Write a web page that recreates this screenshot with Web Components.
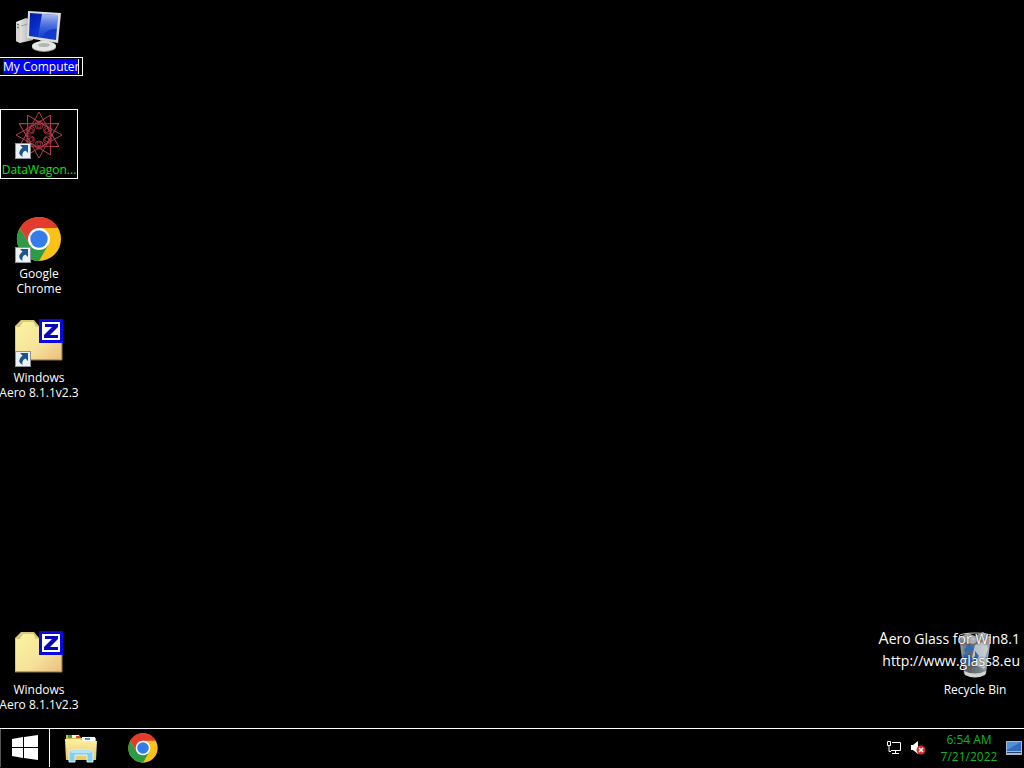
<!DOCTYPE html>
<html lang="en">
<head>
<meta charset="utf-8">
<title>Desktop</title>
<style>
html, body { margin: 0; height: 100%; background: #000; color: #fff; overflow: hidden; }
body { font: 12px/15px "Open Sans", "Noto Sans", sans-serif; }
</style>
</head>
<body>
<desktop-shell>
  <desktop-icon slot="icons" row="1" col="1" icon="computer" label="My Computer" editing></desktop-icon>
  <desktop-icon slot="icons" row="2" col="1" icon="wagon" label="DataWagon..." shortcut selected></desktop-icon>
  <desktop-icon slot="icons" row="3" col="1" icon="chrome" label="Google Chrome" shortcut></desktop-icon>
  <desktop-icon slot="icons" row="4" col="1" icon="folder" label="Windows Aero&nbsp;8.1.1v2.3" shortcut></desktop-icon>
  <desktop-icon slot="icons" row="7" col="1" icon="folder" label="Windows Aero&nbsp;8.1.1v2.3"></desktop-icon>
  <desktop-icon slot="icons" row="7" col="3" icon="bin" label="Recycle Bin"></desktop-icon>
  <glass-watermark slot="overlay"></glass-watermark>
  <task-bar slot="taskbar"></task-bar>
</desktop-shell>
<script>
// Line work of the DataWagon emblem: long crossing spikes turned about the centre, with loops inside.
const rays = Array.from({ length: 12 }, (_, i) =>
  `<path d="M24 1 14 19M24 1 34 19" transform="rotate(${i * 30} 24 24)"/>`).join("");
const rings = Array.from({ length: 6 }, (_, i) =>
  `<g transform="rotate(${i * 60} 24 24)"><circle cx="24" cy="14" r="4"/><circle cx="24" cy="15" r="2"/></g>`).join("");

const ICONS = {
  computer: `<svg viewBox="0 0 48 48">
    <defs>
      <linearGradient id="scr" x1="0" y1="0" x2="1" y2="1"><stop offset="0" stop-color="#0018a8"/><stop offset=".5" stop-color="#0b35d0"/><stop offset="1" stop-color="#1440c8"/></linearGradient>
      <linearGradient id="gls" x1="0" y1="0" x2="0" y2="1"><stop offset="0" stop-color="#e4eeff"/><stop offset="1" stop-color="#2c5ce0" stop-opacity=".3"/></linearGradient>
      <linearGradient id="twr"><stop offset="0" stop-color="#f4f4f2"/><stop offset="1" stop-color="#a9a9a6"/></linearGradient>
    </defs>
    <path d="M1 15 11 11 18 14V33L5 36 1 34Z" fill="url(#twr)"/><path d="M1 15 5 17V36L1 34Z" fill="#d5d5d0"/>
    <path d="M2 17 4 18M2 20 4 21" stroke="#555"/><path d="M6 19 13 17" stroke="#999"/>
    <path d="M25 31 35 32 34 39H26Z" fill="#b8bab8"/>
    <ellipse cx="29" cy="40" rx="12" ry="5" fill="#999"/><ellipse cx="29" cy="39" rx="12" ry="5" fill="#e6e6e2"/><ellipse cx="29" cy="38" rx="6" ry="2" fill="#b4b6b2"/>
    <path d="M13 4 46 6 43 36 12 31Z" fill="#dedfd9"/><path d="M15 6 43 8 41 33 14 29Z" fill="url(#scr)"/><path d="M27 7 43 8 42 22Q31 21 27 31L23 30Z" fill="url(#gls)" opacity=".75"/>
  </svg>`,
  wagon: `<svg viewBox="0 0 48 48"><g fill="none" stroke-width=".9"><g stroke="#c04450">${rays}</g><g stroke="#b03040">${rings}</g></g><circle cx="24" cy="24" r="4" fill="#000"/></svg>`,
  chrome: `<svg viewBox="0 0 48 48">
    <circle cx="24" cy="24" r="22" fill="#fbc116"/>
    <path d="M4.9 13A22 22 0 0 0 24 46L33.5 29.5 14.5 29.5Z" fill="#2d9b45"/>
    <path d="M4.9 13A22 22 0 0 1 43.1 13H24L14.5 29.5Z" fill="#e33b2e"/>
    <circle cx="24" cy="24" r="11" fill="#fff"/><circle cx="24" cy="24" r="8.7" fill="#347de8"/>
  </svg>`,
  folder: `<svg viewBox="0 0 48 48">
    <defs><linearGradient id="fld" x1="0" y1="0" x2="1" y2="1"><stop offset="0" stop-color="#fbf4a0"/><stop offset=".6" stop-color="#f5e29a"/><stop offset="1" stop-color="#edbd7d"/></linearGradient></defs>
    <path d="M0 7 6 1H19L24 7H47V41H0Z" fill="#d9c878"/><path d="M1 8H5L8 3H18L21 8H46V40H1Z" fill="url(#fld)"/>
    <path d="M0 41H47V10" fill="none" stroke="#8f7d35"/>
    <path d="M24 0H48V24H24Z" fill="#0a0ae0"/><path d="M27 3H45V21H27Z" fill="#fff"/>
    <path d="M30 5H43V8L35 16H43V19H29V16L37 8H30Z" fill="#0808b8"/>
  </svg>`,
  bin: `<svg viewBox="0 0 48 48">
    <defs><linearGradient id="bin"><stop offset="0" stop-color="#b9c2c8"/><stop offset=".3" stop-color="#69747d"/><stop offset=".7" stop-color="#8f999f"/><stop offset="1" stop-color="#d6dcdf"/></linearGradient></defs>
    <path d="M8 5 40 5 35 43Q24 49 13 43Z" fill="url(#bin)" opacity=".85"/>
    <path d="M9 6 17 2 24 5 32 1 39 6 36 12 30 9 22 13 13 11Z" fill="#a9b1b6"/>
    <path d="M24 14 33 10 37 17 34 27 38 29 33 38 24 34 21 26Z" fill="#dce2e6" opacity=".7"/>
    <path d="M13 19 18 14 23 18 20 21 18 18 15 22ZM12 24 16 22 17 28 22 27 21 32 14 31ZM24 20 28 25 24 31 22 28 24 25Z" fill="#276bc7"/>
    <path d="M13 40Q24 45 35 40L34 44Q24 49 14 44Z" fill="#d3d5d3"/>
    <ellipse cx="24" cy="5" rx="16" ry="3" fill="none" stroke="#c4cace"/>
  </svg>`,
  explorer: `<svg viewBox="0 0 32 32">
    <defs><linearGradient id="exf" x1="0" y1="0" x2="0" y2="1"><stop offset="0" stop-color="#fff0a8"/><stop offset="1" stop-color="#e8c763"/></linearGradient></defs>
    <path d="M1 3H14L16 6H31V27H1Z" fill="#d8b64e"/><path d="M5 3H14V6H5Z" fill="#f6f2d8"/><path d="M3 3H7V6H3Z" fill="#3d9a45"/><path d="M11 4H15V6H11Z" fill="#d64b31"/>
    <path d="M17 5H30V9H17Z" fill="#fff"/><path d="M20 6H25V8H20Z" fill="#4a8fd9"/>
    <path d="M0 7H15L18 9H32L31 28H1Z" fill="url(#exf)"/>
    <path d="M4 30V21Q4 18 7 18H25Q28 18 28 21V30H22V23H10V30Z" fill="#86cdec" stroke="#d9f3fb"/><path d="M6 20H26" stroke="#e6fbff"/>
  </svg>`,
  start: `<svg viewBox="0 0 28 28"><path d="M1 5 12 3V13H1ZM13 3 27 1V13H13ZM1 14H12V24L1 22ZM13 14H27V26L13 24Z" fill="#fff"/></svg>`,
  network: `<svg viewBox="0 0 16 16" fill="none" stroke="#fff"><path d="M6 2.5H14.5V10.5H5M9.5 11V13M6 13.5H13"/><path d="M1.5 1.5H4.5V5.5H1.5ZM3 6V11.5H5"/></svg>`,
  volume: `<svg viewBox="0 0 16 16"><path d="M1 5H3L8 1V14L3 10H1Z" fill="#fff"/><circle cx="11" cy="10" r="4.5" fill="#d82c2c"/><path d="M9 8 13 12M13 8 9 12" stroke="#fff" stroke-width="1.5"/></svg>`,
  show: `<svg viewBox="0 0 16 14"><path d="M0 0H16V14H0Z" fill="#9fb9d4"/><path d="M1 1H15V10H1Z" fill="#2f6cc0"/><path d="M1 1H15L1 9Z" fill="#5590d4"/><path d="M1 11H15V12H1Z" fill="#27415f"/></svg>`,
  arrow: `<svg viewBox="0 0 16 16"><path d="M0 0H16V16H0Z" fill="#8d959c"/><path d="M1 1H15V15H1Z" fill="#eef1f4"/><path d="M5 2H13V10L10.5 7.5Q6.5 9 7.5 14Q1 10 7.5 4.5Z" fill="#1d5592"/></svg>`
};

class DesktopShell extends HTMLElement {
  constructor() {
    super();
    this.attachShadow({ mode: "open" }).innerHTML = `
      <style>
        :host { display: flex; flex-direction: column; height: 100vh; position: relative; }
        main { flex: 1; min-height: 0; display: grid; grid-template-columns: 78px 1fr 78px; grid-auto-rows: 104px; padding: 5px 10px 0 0; }
      </style>
      <main><slot name="icons"></slot></main>
      <slot name="overlay"></slot>
      <slot name="taskbar"></slot>`;
  }
}

class DesktopIcon extends HTMLElement {
  connectedCallback() {
    const label = this.getAttribute("label");
    this.style.gridArea = `${this.getAttribute("row")} / ${this.getAttribute("col")}`;
    const art = `<span class="art">${ICONS[this.getAttribute("icon")]}${this.hasAttribute("shortcut") ? `<span class="badge">${ICONS.arrow}</span>` : ""}</span>`;
    this.attachShadow({ mode: "open" }).innerHTML = `
      <style>
        :host { display: block; }
        button, .tile { box-sizing: border-box; width: 78px; display: flex; flex-direction: column; align-items: center; gap: 3px; padding: 1px 0; margin: 0; border: 1px solid transparent; background: none; color: inherit; font: inherit; text-align: center; }
        :host([selected]) button { border-color: #fff; color: #0be01c; }
        .art { position: relative; width: 48px; height: 48px; }
        .art svg { display: block; width: 100%; height: 100%; }
        .badge { position: absolute; left: 0; bottom: 0; width: 16px; height: 16px; }
        .tile { gap: 2px; align-items: flex-start; }
        .tile .art { align-self: center; }
        input { box-sizing: border-box; flex: none; width: 84px; height: 19px; margin: 0 0 0 -2px; padding: 1px 3px; border: 1px solid #fff; outline: 0; color: #fff; font: inherit;
          background: linear-gradient(#fff, #fff) right / 1px 100% no-repeat content-box, linear-gradient(#00f, #00f) content-box, #000; }
      </style>
      ${this.hasAttribute("editing")
        ? `<div class="tile">${art}<input type="text" aria-label="Icon name" value="${label}"></div>`
        : `<button type="button">${art}<span>${label}</span></button>`}`;
  }
}

class GlassWatermark extends HTMLElement {
  constructor() {
    super();
    this.attachShadow({ mode: "open" }).innerHTML = `
      <style>
        :host { position: absolute; right: 4px; bottom: 96px; text-align: right; font-size: 14px; line-height: 22px; pointer-events: none; text-shadow: 0 0 2px #000; }
        p { margin: 0; }
        .name::first-letter { font-size: 16px; line-height: 16px; }
      </style>
      <p class="name">Aero Glass for Win8.1</p><p>http://www.glass8.eu</p>`;
  }
}

class TaskBar extends HTMLElement {
  constructor() {
    super();
    this.attachShadow({ mode: "open" }).innerHTML = `
      <style>
        :host { display: flex; align-items: stretch; box-sizing: border-box; height: 40px; padding-bottom: 1px; border-top: 1px solid #fff; background: #000; }
        button { display: grid; place-items: center; margin: 0; padding: 0; border: 0; background: none; color: inherit; font: inherit; }
        svg { display: block; width: 100%; height: 100%; }
        .start { box-sizing: border-box; width: 50px; border: solid #fff; border-width: 0 1px 0 1px; border-left-color: #555; }
        .start svg { width: 28px; height: 28px; }
        .app { width: 62px; }
        .app svg { width: 32px; height: 32px; }
        .tray { margin-left: auto; display: flex; align-items: center; gap: 8px; }
        .tray button { width: 16px; height: 16px; }
        time { color: #12b428; line-height: 17px; text-align: center; width: 58px; padding-left: 6px; white-space: nowrap; }
        time span { display: block; }
        .tray .show { height: 14px; width: 18px; padding-right: 2px; }
      </style>
      <button class="start" type="button" aria-label="Start">${ICONS.start}</button>
      <button class="app" type="button" aria-label="File Explorer">${ICONS.explorer}</button>
      <button class="app" type="button" aria-label="Google Chrome">${ICONS.chrome}</button>
      <div class="tray">
        <button type="button" aria-label="Network">${ICONS.network}</button>
        <button type="button" aria-label="Volume muted">${ICONS.volume}</button>
        <time datetime="2022-07-21T06:54"><span>6:54 AM</span><span>7/21/2022</span></time>
        <button class="show" type="button" aria-label="Show desktop">${ICONS.show}</button>
      </div>`;
  }
}

customElements.define("desktop-shell", DesktopShell);
customElements.define("desktop-icon", DesktopIcon);
customElements.define("glass-watermark", GlassWatermark);
customElements.define("task-bar", TaskBar);
</script>
</body>
</html>
